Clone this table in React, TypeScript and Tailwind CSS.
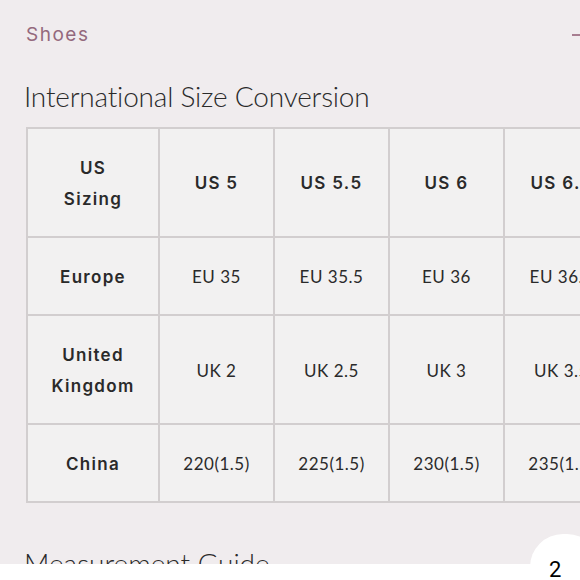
const head = ["US 5", "US 5.5", "US 6", "US 6.5"];
const rows = [
  { label: ["Europe"], vals: ["EU 35", "EU 35.5", "EU 36", "EU 36.5"], h: "h-[78px]" },
  { label: ["United", "Kingdom"], vals: ["UK 2", "UK 2.5", "UK 3", "UK 3.5"], h: "h-[109px]" },
  { label: ["China"], vals: ["220(1.5)", "225(1.5)", "230(1.5)", "235(1.5)"], h: "h-[78px]" },
];

const labelFont = { fontFamily: "Inter, 'Open Sans', sans-serif" };
const valFont = { fontFamily: "Lato, 'Open Sans', sans-serif" };

const App = () => {
  return (
    <div className="relative w-[580px] h-[580px] overflow-hidden bg-[#f0ecee]">
      {/* Section header */}
      <div className="flex items-center justify-between pl-[26px] pt-[22px] h-[48px]">
        <span className="text-[19px] tracking-[1.5px] text-[#94697d]" style={labelFont}>
          Shoes
        </span>
        <span className="w-[8px] h-[2px] bg-[#a77d90]" />
      </div>

      <h2
        className="pl-[24px] mt-[30px] text-[28px] font-light text-[#2a2a2a] leading-[36px] tracking-[-0.2px]"
        style={valFont}
      >
        International Size Conversion
      </h2>

      {/* Table */}
      <div className="ml-[26px] mt-[13px] w-[640px] border-t-2 border-l-2 border-[#d2cecf] bg-[#f2f1f1]">
        <div className="flex h-[109px]">
          <div className="w-[132px] shrink-0 border-r-2 border-b-2 border-[#d2cecf] flex flex-col items-center justify-center pt-[2px] leading-[31px] text-[17px] font-semibold tracking-[1.3px] text-[#2a2a2a]" style={labelFont}>
            <span>US</span>
            <span>Sizing</span>
          </div>
          {head.map((h) => (
            <div key={h} className="w-[115px] shrink-0 border-r-2 border-b-2 border-[#d2cecf] flex items-center justify-center pt-[2px] text-[17px] font-semibold tracking-[1.3px] text-[#2a2a2a]" style={labelFont}>
              {h}
            </div>
          ))}
        </div>
        {rows.map((r) => (
          <div key={r.label[0]} className={`flex ${r.h}`}>
            <div className="w-[132px] shrink-0 border-r-2 border-b-2 border-[#d2cecf] flex flex-col items-center justify-center pt-[2px] leading-[31px] text-[17px] font-semibold tracking-[1.3px] text-[#2a2a2a]" style={labelFont}>
              {r.label.map((l) => (
                <span key={l}>{l}</span>
              ))}
            </div>
            {r.vals.map((v) => (
              <div key={v} className="w-[115px] shrink-0 border-r-2 border-b-2 border-[#d2cecf] flex items-center justify-center pt-[2px] text-[17px] tracking-[0.5px] text-[#2a2a2a]" style={valFont}>
                {v}
              </div>
            ))}
          </div>
        ))}
      </div>

      <h2 className="pl-[24px] mt-[42px] text-[28px] font-light text-[#2a2a2a] leading-[36px]" style={valFont}>
        Measurement Guide
      </h2>

      {/* bottom overlay */}
      <div className="absolute left-0 right-0 bottom-0 h-[16px] bg-white" />
      <div className="absolute right-[-20px] bottom-[-20px] w-[70px] h-[66px] rounded-full bg-white flex items-start justify-start pl-[19px] pt-[24px]">
        <span className="text-[22px] leading-[24px] text-black" style={{ fontFamily: "Roboto, sans-serif" }}>2</span>
      </div>
    </div>
  );
};

export default App;
